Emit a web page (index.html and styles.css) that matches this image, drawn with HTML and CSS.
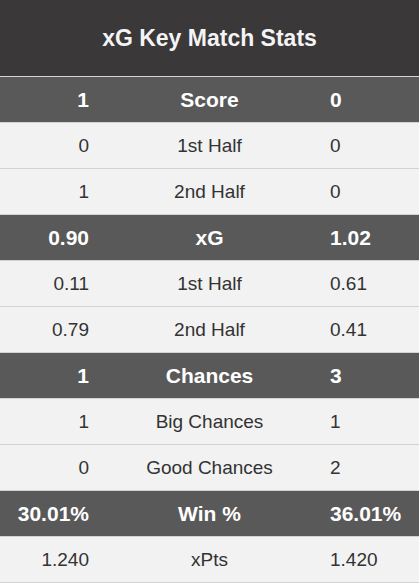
FILE: index.html
```html
<!DOCTYPE html>
<html>
<head>
<meta charset="utf-8">
<link rel="stylesheet" href="styles.css">
</head>
<body>
<div class="stats">
  <div class="title">xG Key Match Stats</div>
  <div class="row head"><div class="cell home">1</div><div class="cell label">Score</div><div class="cell away">0</div></div>
  <div class="row"><div class="cell home">0</div><div class="cell label">1st Half</div><div class="cell away">0</div></div>
  <div class="row"><div class="cell home">1</div><div class="cell label">2nd Half</div><div class="cell away">0</div></div>
  <div class="row head"><div class="cell home">0.90</div><div class="cell label">xG</div><div class="cell away">1.02</div></div>
  <div class="row"><div class="cell home">0.11</div><div class="cell label">1st Half</div><div class="cell away">0.61</div></div>
  <div class="row"><div class="cell home">0.79</div><div class="cell label">2nd Half</div><div class="cell away">0.41</div></div>
  <div class="row head"><div class="cell home">1</div><div class="cell label">Chances</div><div class="cell away">3</div></div>
  <div class="row"><div class="cell home">1</div><div class="cell label">Big Chances</div><div class="cell away">1</div></div>
  <div class="row"><div class="cell home">0</div><div class="cell label">Good Chances</div><div class="cell away">2</div></div>
  <div class="row head"><div class="cell home">30.01%</div><div class="cell label">Win %</div><div class="cell away">36.01%</div></div>
  <div class="row"><div class="cell home">1.240</div><div class="cell label">xPts</div><div class="cell away">1.420</div></div>
</div>
</body>
</html>
```
FILE: styles.css
```css
html, body {
  margin: 0;
  padding: 0;
  background: #ffffff;
}
.stats {
  width: 419px;
  font-family: "Liberation Sans", Arial, sans-serif;
  color: #333333;
}
.title {
  height: 76px;
  display: flex;
  align-items: center;
  justify-content: center;
  background: #3a3839;
  color: #f4f4f4;
  font-weight: bold;
  font-size: 23px;
  border-bottom: 1px solid #d6d6d6;
}
.row {
  display: grid;
  grid-template-columns: 89px 1fr 89px;
  height: 45px;
  background: #f2f2f2;
  border-bottom: 1px solid #d2d2d2;
  font-size: 19px;
}
.row.head {
  background: #595959;
  color: #ffffff;
  font-weight: bold;
  font-size: 21px;
}
.cell {
  display: flex;
  align-items: center;
  white-space: nowrap;
  min-width: 0;
}
.home {
  justify-content: flex-end;
}
.label {
  justify-content: center;
}
.away {
  justify-content: flex-start;
}
```
